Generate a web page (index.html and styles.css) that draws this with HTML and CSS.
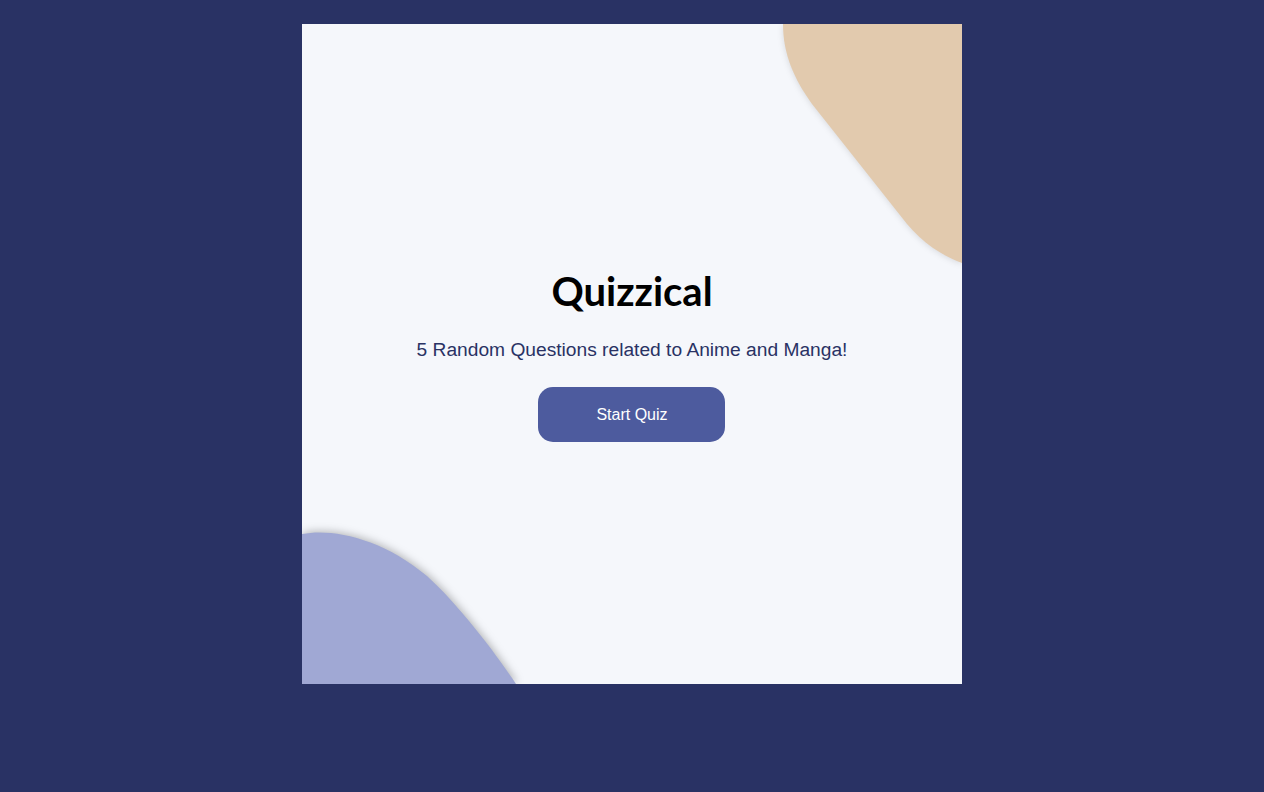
FILE: index.html
```html
<!DOCTYPE html>
<html>
<head>
<meta charset="utf-8">
<link rel="stylesheet" href="styles.css">
</head>
<body>
<main class="card">
  <svg class="blob blob-top" width="660" height="660" viewBox="0 0 660 660">
    <path d="M481,0 C481,30 492,55 510,80 L605,200 C620,218 640,232 660,239 L660,0 Z" fill="#E2CAAE"/>
  </svg>
  <svg class="blob blob-bottom" width="660" height="660" viewBox="0 0 660 660">
    <path d="M0,510 C30,504 80,514 125,552 C150,575 170,600 190,626 C200,640 209,652 214,660 L0,660 Z" fill="#A0A8D4"/>
  </svg>
  <section class="intro">
    <h1 class="title">Quizzical</h1>
    <p class="subtitle">5 Random Questions related to Anime and Manga!</p>
    <button class="start">Start Quiz</button>
  </section>
</main>
</body>
</html>
```
FILE: styles.css
```css
html, body {
  margin: 0;
  padding: 0;
}
body {
  background: #293264;
  min-height: 792px;
  padding-top: 24px;
  box-sizing: border-box;
}
.card {
  position: relative;
  width: 660px;
  height: 660px;
  margin: 0 auto;
  background: #F5F7FB;
  overflow: hidden;
  display: flex;
  align-items: center;
  justify-content: center;
}
.blob {
  position: absolute;
  left: 0;
  top: 0;
}
.blob-top path {
  filter: drop-shadow(0 1px 3px rgba(0,0,0,0.12));
}
.blob-bottom path {
  filter: drop-shadow(1px -1px 4px rgba(0,0,0,0.28));
}
.intro {
  position: relative;
  display: flex;
  flex-direction: column;
  align-items: center;
  padding-top: 1px;
}
.title {
  margin: 0;
  font-family: Lato, "Noto Sans", sans-serif;
  font-weight: 700;
  font-size: 40px;
  line-height: 48px;
  color: #000;
}
.subtitle {
  margin: 24px 0 26px;
  font-family: "Liberation Sans", Arial, sans-serif;
  font-size: 19.2px;
  line-height: 22px;
  color: #293264;
}
.start {
  width: 187px;
  height: 55px;
  border: none;
  border-radius: 15px;
  background: #4D5B9E;
  color: #fff;
  font-family: "Liberation Sans", Arial, sans-serif;
  font-size: 16px;
  cursor: pointer;
}
```
